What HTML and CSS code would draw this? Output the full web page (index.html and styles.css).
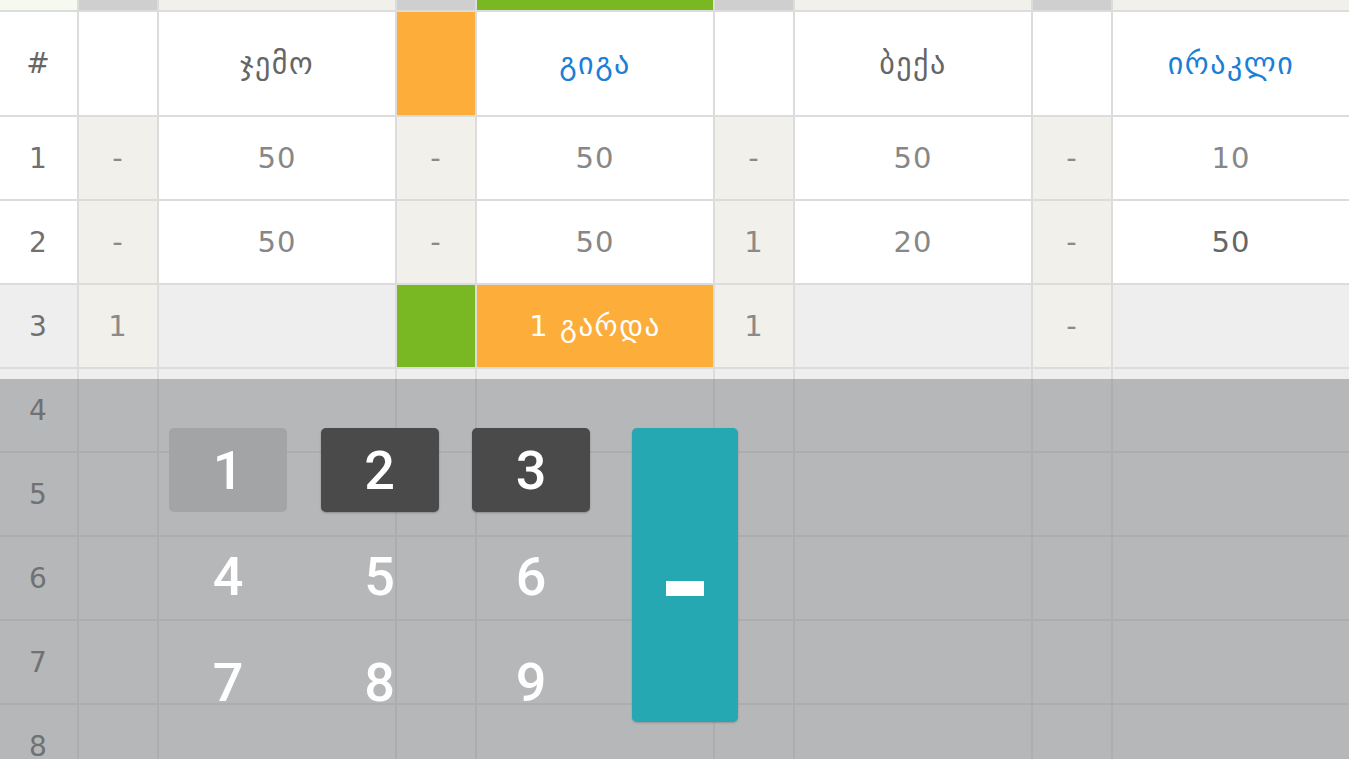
FILE: index.html
```html
<!DOCTYPE html>
<html lang="ka">
<head>
<meta charset="utf-8">
<title>Scores</title>
<link rel="stylesheet" href="styles.css">
</head>
<body>
<div class="screen">
  <div class="table">
    <div class="strip strip-first"></div>
    <div class="strip strip-score"></div>
    <div class="strip strip-name"></div>
    <div class="strip strip-score"></div>
    <div class="strip strip-active"></div>
    <div class="strip strip-score"></div>
    <div class="strip strip-name"></div>
    <div class="strip strip-score"></div>
    <div class="strip strip-name"></div>

    <div class="cell head">#</div>
    <div class="cell head"></div>
    <div class="cell head name">ჯემო</div>
    <div class="cell head orange"></div>
    <div class="cell head name blue">გიგა</div>
    <div class="cell head"></div>
    <div class="cell head name">ბექა</div>
    <div class="cell head"></div>
    <div class="cell head name blue">ირაკლი</div>

    <div class="cell num">1</div>
    <div class="cell score">-</div>
    <div class="cell val">50</div>
    <div class="cell score">-</div>
    <div class="cell val">50</div>
    <div class="cell score">-</div>
    <div class="cell val">50</div>
    <div class="cell score">-</div>
    <div class="cell val">10</div>

    <div class="cell num">2</div>
    <div class="cell score">-</div>
    <div class="cell val">50</div>
    <div class="cell score">-</div>
    <div class="cell val">50</div>
    <div class="cell score">1</div>
    <div class="cell val">20</div>
    <div class="cell score">-</div>
    <div class="cell val strong">50</div>

    <div class="cell num cur">3</div>
    <div class="cell score">1</div>
    <div class="cell val cur"></div>
    <div class="cell green"></div>
    <div class="cell val orange white">1 გარდა</div>
    <div class="cell score">1</div>
    <div class="cell val cur"></div>
    <div class="cell score">-</div>
    <div class="cell val cur"></div>

    <div class="cell num cur">4</div><div class="cell cur"></div><div class="cell cur"></div><div class="cell cur"></div><div class="cell cur"></div><div class="cell cur"></div><div class="cell cur"></div><div class="cell cur"></div><div class="cell cur"></div>
    <div class="cell num cur">5</div><div class="cell cur"></div><div class="cell cur"></div><div class="cell cur"></div><div class="cell cur"></div><div class="cell cur"></div><div class="cell cur"></div><div class="cell cur"></div><div class="cell cur"></div>
    <div class="cell num cur">6</div><div class="cell cur"></div><div class="cell cur"></div><div class="cell cur"></div><div class="cell cur"></div><div class="cell cur"></div><div class="cell cur"></div><div class="cell cur"></div><div class="cell cur"></div>
    <div class="cell num cur">7</div><div class="cell cur"></div><div class="cell cur"></div><div class="cell cur"></div><div class="cell cur"></div><div class="cell cur"></div><div class="cell cur"></div><div class="cell cur"></div><div class="cell cur"></div>
    <div class="cell num cur">8</div><div class="cell cur"></div><div class="cell cur"></div><div class="cell cur"></div><div class="cell cur"></div><div class="cell cur"></div><div class="cell cur"></div><div class="cell cur"></div><div class="cell cur"></div>
  </div>

  <div class="overlay">
    <div class="keypad">
      <div class="key pressed">1</div>
      <div class="key filled">2</div>
      <div class="key filled">3</div>
      <div class="key minus"><span class="bar"></span></div>
      <div class="key">4</div>
      <div class="key">5</div>
      <div class="key">6</div>
      <div class="key">7</div>
      <div class="key">8</div>
      <div class="key">9</div>
    </div>
  </div>
</div>
</body>
</html>
```

FILE: styles.css
```css
* { box-sizing: border-box; }
html, body { margin: 0; padding: 0; }
body {
  width: 1349px;
  height: 759px;
  overflow: hidden;
  background: #ffffff;
  font-family: "DejaVu Sans", sans-serif;
}
.screen {
  position: relative;
  width: 1349px;
  height: 759px;
  overflow: hidden;
}
.table {
  display: grid;
  grid-template-columns: 77px 78px 236px 78px 236px 78px 236px 78px 1fr;
  grid-template-rows: 10px 103px repeat(8, 82px);
  gap: 2px;
  background: #dcdcdc;
}
.strip { background: #f2f0eb; }
.strip-first { background: #f5f9ef; }
.strip-score { background: #cfcfcf; }
.strip-active { background: #79b823; }

.cell {
  background: #ffffff;
  display: flex;
  align-items: center;
  justify-content: center;
  font-size: 29px;
  color: #878787;
  letter-spacing: 1px;
}
.head { color: #666666; font-size: 28px; }
.head.name { font-size: 30px; letter-spacing: 1.5px; }
.blue { color: #1b7fd6; }
.num { color: #707070; font-size: 28px; }
.score { background: #f2f0eb; color: #8a8a8a; }
.val { color: #878787; }
.strong { color: #666666; }
.cur { background: #eeeeee; }
.orange { background: #fdad3a; }
.green { background: #79b823; }
.white { color: #ffffff; font-size: 29px; letter-spacing: 1.5px; }

.overlay {
  position: absolute;
  left: 0;
  top: 379px;
  width: 1349px;
  height: 380px;
  background: rgba(113, 115, 119, 0.45);
}
.keypad {
  position: absolute;
  left: 169px;
  top: 49px;
  display: grid;
  grid-template-columns: 118px 118px 118px 114.5px;
  grid-template-rows: 84px 84px 84px;
  column-gap: 33.5px;
  row-gap: 22px;
}
.key {
  display: flex;
  align-items: center;
  justify-content: center;
  border-radius: 5px;
  font-family: Roboto, "DejaVu Sans", sans-serif;
  font-size: 54px;
  font-weight: 500;
  color: #ffffff;
}
.pressed { background: #a3a4a6; }
.filled { background: #4a4a4a; box-shadow: 0 1px 2px rgba(0,0,0,0.25); }
.minus {
  grid-row: 1 / span 3;
  grid-column: 4;
  margin-left: 8.5px;
  background: #25a8b1;
  height: 294px;
  box-shadow: 0 1px 2px rgba(0,0,0,0.2);
}
.bar {
  display: block;
  width: 38px;
  height: 15px;
  margin-top: 27px;
  background: #ffffff;
}
```
